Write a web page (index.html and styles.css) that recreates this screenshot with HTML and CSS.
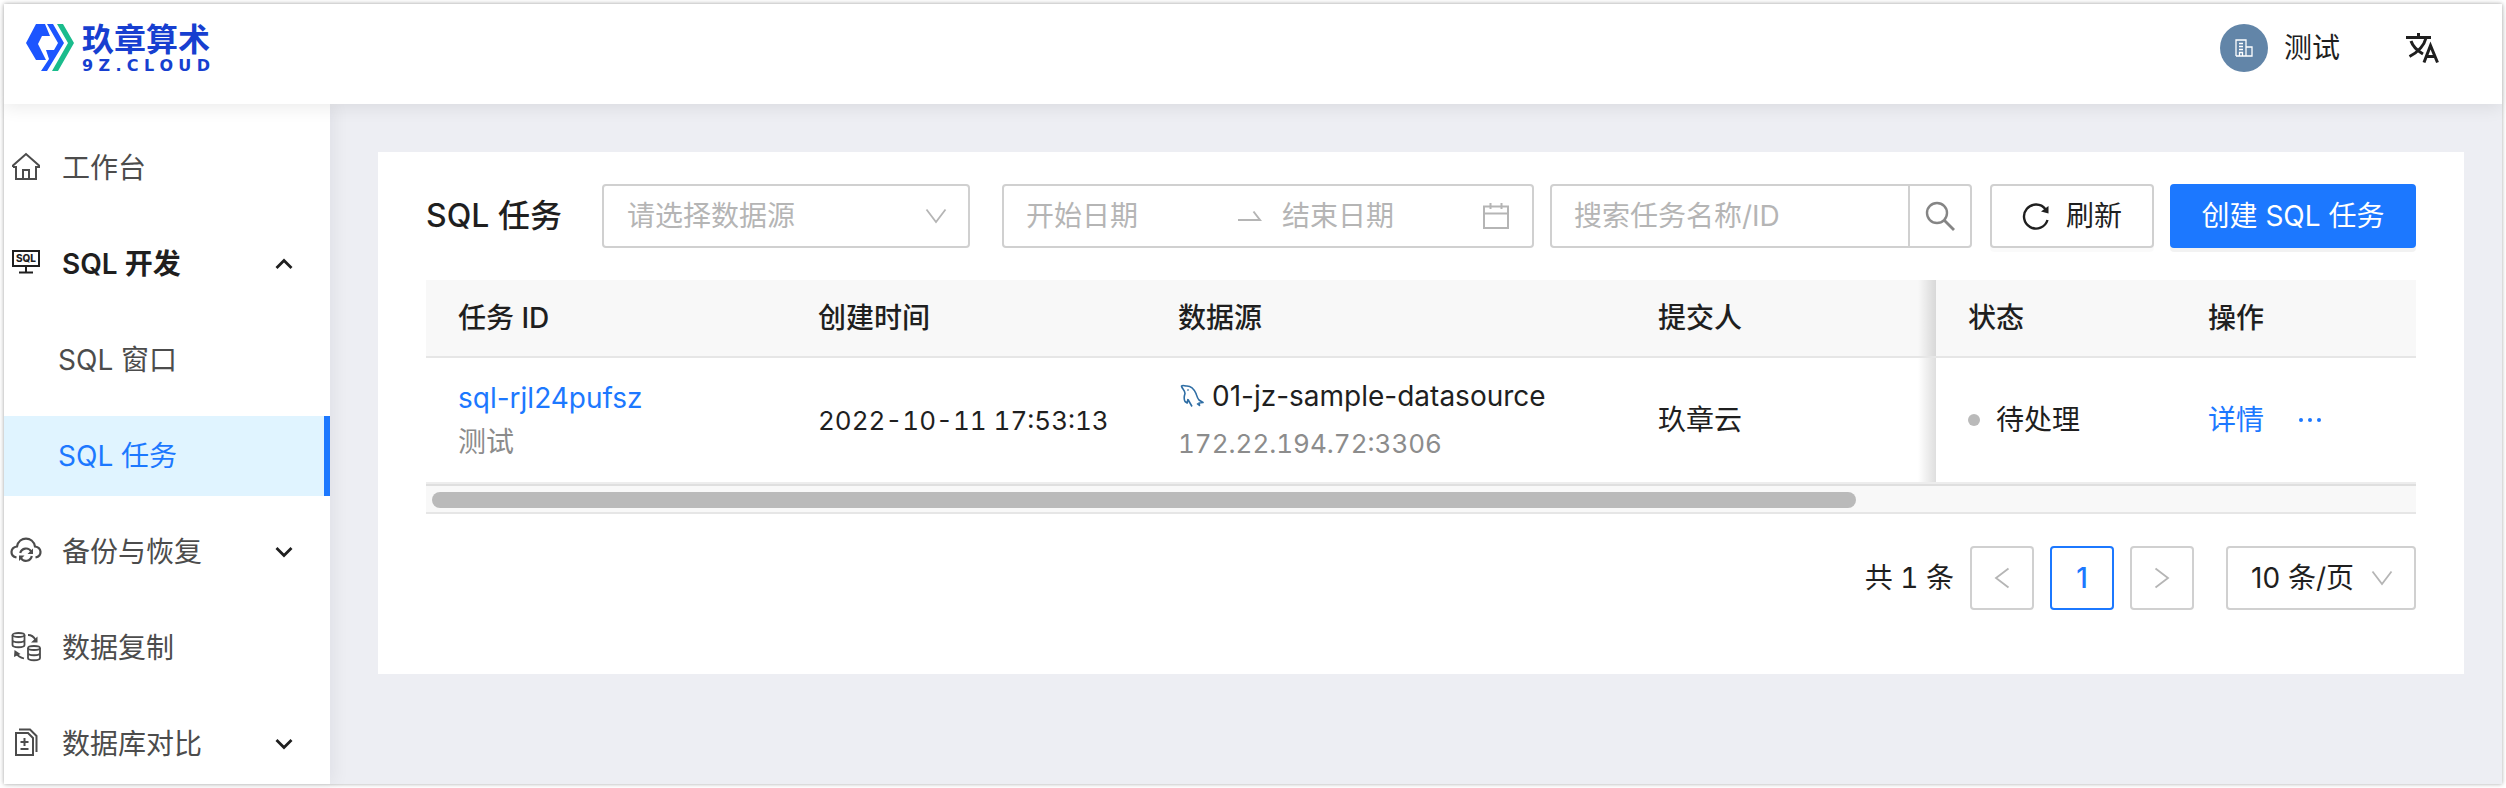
FILE: index.html
```html
<!DOCTYPE html>
<html lang="zh-CN">
<head>
<meta charset="utf-8">
<meta name="viewport" content="width=device-width, initial-scale=1">
<title>SQL 任务</title>
<link rel="stylesheet" href="styles.css">
</head>
<body>
<div class="app">
  <header class="topbar">
    <a class="brand" href="#">
      <svg class="brand-mark" viewBox="0 0 48 48" aria-hidden="true">
        <path fill="#1c55ff" d="M10 0h9l5 12h-8l-4 8 8 16H10L0 19z"/>
        <path fill="#1c55ff" d="M21 0h6l11 19-17 28h-6l8-12-3-9h8l4-7z"/>
        <path fill="#1abc8c" d="M31 0h6l11 19-16 28h-6l16-28z"/>
      </svg>
      <span class="brand-text">
        <span class="brand-name">玖章算术</span>
        <span class="brand-domain"><span>9</span><span>Z</span><span>.</span><span>C</span><span>L</span><span>O</span><span>U</span><span>D</span></span>
      </span>
    </a>
    <div class="account">
      <button class="user" type="button">
        <span class="avatar">
          <svg viewBox="0 0 18 18" aria-hidden="true"><path d="M1 17V1h10v16M1 17h16V8h-6M4 4.500h4M4 7.500h4M4 10.500h4M4.500 17v-3.500h3V17" fill="none" stroke="#fff" stroke-width="1.300"/></svg>
        </span>
        <span>测试</span>
      </button>
      <button class="lang" type="button" aria-label="切换语言">
        <svg viewBox="0 0 34 34" aria-hidden="true"><g fill="none" stroke="#1f1f1f" stroke-width="3"><path d="M0 6.500h25M12.500 2v4M5 10c2 6 6 9.500 12 13M20 7c-2 8-8 14-16.500 18.500"/><path d="M18 31.500L24.500 14.500 31.500 31.500M20.500 25.500h9"/></g></svg>
      </button>
    </div>
  </header>

  <div class="body">
    <nav class="side">
      <a class="item" href="#">
        <svg class="icon" viewBox="0 0 32 32"><path d="M6 14v13h20V14M3 15v-1.500L16 2l13 11.500V15h-3M6 15H3M13 27v-9h6v9" fill="none" stroke="currentColor" stroke-width="2"/></svg>
        <span class="label">工作台</span>
      </a>
      <button class="item open" type="button" aria-expanded="true">
        <svg class="icon" viewBox="0 0 32 32"><path d="M3 3h26v15H3zM16 18v6M9 24.500h14" fill="none" stroke="currentColor" stroke-width="2"/><text x="16" y="14" text-anchor="middle" class="icon-text">SQL</text></svg>
        <span class="label">SQL 开发</span>
        <svg class="caret" viewBox="0 0 18 12"><path d="M1.500 10L9 2.500l7.500 7.500" fill="none" stroke="currentColor" stroke-width="2.800"/></svg>
      </button>
      <a class="item sub" href="#">SQL 窗口</a>
      <a class="item sub current" href="#" aria-current="page">SQL 任务</a>
      <button class="item" type="button" aria-expanded="false">
        <svg class="icon" viewBox="0 0 32 32"><g fill="none" stroke="currentColor" stroke-width="2.200"><path d="M6.500 21.500C-.5 20 0 11.500 7 10.500c2-10.500 16-10.500 18 0 7 1 7.500 9.500 .5 11"/><path d="M10.200 17a6 6 0 0 1 11-1.500M21.800 20a6 6 0 0 1-11 2"/></g><path d="M23 12.500V18h-5.500zM9 25v-5.500h5.500z" fill="currentColor"/></svg>
        <span class="label">备份与恢复</span>
        <svg class="caret" viewBox="0 0 18 12"><path d="M1.500 2L9 9.500 16.500 2" fill="none" stroke="currentColor" stroke-width="2.800"/></svg>
      </button>
      <a class="item" href="#">
        <svg class="icon" viewBox="0 0 32 32"><g fill="none" stroke="currentColor" stroke-width="1.800"><ellipse cx="8.500" cy="3" rx="6" ry="2"/><path d="M2.500 3v10c0 3 12 3 12 0V3M2.500 8c0 3 12 3 12 0"/><ellipse cx="24" cy="16" rx="6" ry="2"/><path d="M18 16v10c0 3 12 3 12 0V16M18 21c0 3 12 3 12 0"/><path d="M18 3c4 0 6 2 7.500 5M14 26.500c-4-1-6-2-7.500-5"/></g><path d="M27.500 4.500v6h-6.500zM4 25l.5-7 6 4z" fill="currentColor"/></svg>
        <span class="label">数据复制</span>
      </a>
      <button class="item" type="button" aria-expanded="false">
        <svg class="icon" viewBox="0 0 32 32"><g fill="none" stroke="currentColor" stroke-width="2"><path d="M6 5h12l5 5v17H6zM9 1.500h11l6.500 6.500v16M10.500 14h8M14.500 10v8M10.500 21h8"/></g></svg>
        <span class="label">数据库对比</span>
        <svg class="caret" viewBox="0 0 18 12"><path d="M1.500 2L9 9.500 16.500 2" fill="none" stroke="currentColor" stroke-width="2.800"/></svg>
      </button>
    </nav>

    <main class="content">
      <section class="card">
        <div class="toolbar">
          <h1 class="title">SQL 任务</h1>
          <div class="select source">
            <select aria-label="数据源"><option>请选择数据源</option></select>
            <svg class="arrow" viewBox="0 0 22 16"><path d="M1.500 1.500L11 14l9.500-12.500" fill="none" stroke="currentColor" stroke-width="1.800"/></svg>
          </div>
          <div class="range">
            <input class="start" type="text" placeholder="开始日期" aria-label="开始日期">
            <svg class="to" viewBox="0 0 24 12"><path d="M0 10h22L15.500 1.500" fill="none" stroke="currentColor" stroke-width="2"/></svg>
            <input type="text" placeholder="结束日期" aria-label="结束日期">
            <svg class="calendar" viewBox="0 0 28 28"><path d="M2 4.500h24V26H2zM2 11.500h24M8.500 1v6M19.500 1v6" fill="none" stroke="currentColor" stroke-width="2"/></svg>
          </div>
          <div class="search">
            <input type="search" placeholder="搜索任务名称/ID" aria-label="搜索任务名称/ID">
            <button type="button" aria-label="搜索"><svg viewBox="0 0 30 30"><circle cx="12" cy="12" r="10" fill="none" stroke="currentColor" stroke-width="2.400"/><path d="M19 19l10 10" stroke="currentColor" stroke-width="2.800"/></svg></button>
          </div>
          <button class="btn refresh" type="button">
            <svg viewBox="0 0 28 28"><path d="M23.500 7.200A12 12 0 1 0 25.500 18" fill="none" stroke="currentColor" stroke-width="2.400"/><path d="M26.500 4v7.500L19 9.500z" fill="currentColor"/></svg>
            刷新
          </button>
          <button class="btn primary" type="button">创建 SQL 任务</button>
        </div>

        <table class="table">
          <colgroup><col class="c-id"><col class="c-time"><col class="c-source"><col class="c-user"><col class="c-state"><col class="c-action"></colgroup>
          <thead>
            <tr><th>任务 ID</th><th>创建时间</th><th>数据源</th><th class="edge">提交人</th><th>状态</th><th>操作</th></tr>
          </thead>
          <tbody>
            <tr>
              <td><a href="#">sql-rjl24pufsz</a><div class="muted">测试</div></td>
              <td><time class="digits" datetime="2022-10-11T17:53:13">2022-10-11 17:53:13</time></td>
              <td>
                <div class="db">
                  <svg viewBox="0 0 26 26"><g fill="none" stroke="#2e6da4" stroke-width="1.600" stroke-linejoin="round"><path d="M10 16.500l2 3.500 2 3.500M10 16l-.8 4-2.200-1.500c-1.500-3-1-5 0-8C7 7 4 6 3.500 3c1-1 3-.5 4.500 0 5-.5 8 3 10 7.500 1 3 1.500 5 3 6.500l4 2.500-4 .5.500 2.500-2.500-2"/><path d="M9.500 6.500l1 1"/></g></svg>
                  <span>01-jz-sample-datasource</span>
                </div>
                <div class="muted host digits">172.22.194.72:3306</div>
              </td>
              <td class="edge">玖章云</td>
              <td><span class="state">待处理</span></td>
              <td>
                <div class="actions">
                  <a href="#">详情</a>
                  <button class="more" type="button" aria-label="更多操作"><svg viewBox="0 0 24 8"><g fill="currentColor"><circle cx="3" cy="4" r="2"/><circle cx="12" cy="4" r="2"/><circle cx="21" cy="4" r="2"/></g></svg></button>
                </div>
              </td>
            </tr>
          </tbody>
        </table>
        <div class="scroll"><div class="thumb"></div></div>

        <div class="pager">
          <span class="total">共 1 条</span>
          <button class="page" type="button" aria-label="上一页" disabled><svg viewBox="0 0 16 22"><path d="M14.500 1.500L2 11l12.500 9.500" fill="none" stroke="currentColor" stroke-width="1.800"/></svg></button>
          <button class="page active" type="button" aria-current="page">1</button>
          <button class="page" type="button" aria-label="下一页" disabled><svg viewBox="0 0 16 22"><path d="M1.500 1.500L14 11 1.500 20.500" fill="none" stroke="currentColor" stroke-width="1.800"/></svg></button>
          <div class="select size">
            <select aria-label="每页条数"><option>10 条/页</option></select>
            <svg class="arrow" viewBox="0 0 22 16"><path d="M1.500 1.500L11 14l9.500-12.500" fill="none" stroke="currentColor" stroke-width="1.800"/></svg>
          </div>
        </div>
      </section>
    </main>
  </div>
</div>
</body>
</html>
```
FILE: styles.css
```css
* {
  box-sizing: border-box;
}

:root {
  --text: #1f1f1f;
  --muted: #8c8c8c;
  --hint: #b5b5b5;
  --border: #d0d0d0;
  --line: #e6e6e6;
  --blue: #1c78ff;
}

body {
  margin: 0;
  padding: 4px;
  background: #fff;
  color: var(--text);
  font: 28px/44px Inter, "Noto Sans CJK SC", sans-serif;
}

a {
  color: var(--blue);
  text-decoration: none;
}

button,
input,
select {
  font: inherit;
  color: inherit;
  margin: 0;
}

svg {
  display: block;
  flex: none;
}

.app {
  display: flex;
  flex-direction: column;
  min-height: calc(100vh - 8px);
  box-shadow: 0 0 4px rgba(0, 0, 0, 0.35);
}

/* Top bar */

.topbar {
  position: relative;
  z-index: 2;
  display: flex;
  align-items: flex-start;
  justify-content: space-between;
  height: 100px;
  padding: 20px 62px 0 22px;
  background: #fff;
  box-shadow: 0 4px 16px rgba(0, 0, 0, 0.08);
}

.brand {
  display: flex;
  gap: 8px;
  color: #173fd0;
}

.brand-mark {
  width: 48px;
  height: 48px;
}

.brand-text {
  display: flex;
  flex-direction: column;
  font-weight: 700;
}

.brand-name {
  font-size: 32px;
  line-height: 32px;
}

.brand-domain {
  display: flex;
  justify-content: space-between;
  font-family: "DejaVu Sans", sans-serif;
  font-size: 16px;
  line-height: 20px;
}

.account {
  display: flex;
  align-items: center;
  gap: 66px;
}

.user,
.lang {
  display: flex;
  align-items: center;
  gap: 16px;
  padding: 0;
  border: 0;
  background: none;
}

.avatar {
  display: grid;
  place-items: center;
  width: 48px;
  height: 48px;
  border-radius: 50%;
  background: #6285a8;
}

.avatar svg {
  width: 18px;
  height: 18px;
}

.lang svg {
  width: 34px;
  height: 34px;
}

/* Sidebar */

.body {
  display: flex;
  flex: 1;
}

.side {
  position: relative;
  z-index: 1;
  display: flex;
  flex-direction: column;
  gap: 16px;
  flex: none;
  width: 326px;
  padding-top: 24px;
  background: #fff;
  box-shadow: 4px 0 16px rgba(0, 21, 41, 0.06);
}

.item {
  display: flex;
  align-items: center;
  height: 80px;
  padding: 0 37px 0 6px;
  border: 0;
  background: none;
  color: #4c4c4c;
  text-align: left;
}

.icon {
  width: 32px;
  height: 32px;
  margin-right: 20px;
}

.icon-text {
  font-size: 10px;
  font-weight: 800;
  fill: currentColor;
}

.label {
  flex: 1;
}

.caret {
  width: 18px;
  height: 12px;
  color: var(--text);
}

.item.open {
  color: var(--text);
  font-weight: 600;
}

.item.sub {
  padding-left: 54px;
}

.item.current {
  border-right: 6px solid var(--blue);
  background: #e0f4ff;
  color: var(--blue);
}

/* Content */

.content {
  flex: 1;
  min-width: 0;
  padding: 48px 38px 48px 48px;
  background: #edeef3;
}

.card {
  padding: 32px 48px 64px;
  background: #fff;
}

.toolbar {
  display: flex;
  align-items: center;
  margin-bottom: 32px;
}

.title {
  margin: 0 auto 0 0;
  font-size: 32px;
  font-weight: 500;
  white-space: nowrap;
}

.select {
  position: relative;
  height: 64px;
}

.select select {
  width: 100%;
  height: 100%;
  padding: 0 23px;
  border: 2px solid var(--border);
  border-radius: 4px;
  background: #fff;
  appearance: none;
}

.arrow {
  position: absolute;
  top: 24px;
  right: 23px;
  width: 22px;
  height: 16px;
  color: var(--hint);
  pointer-events: none;
}

.source {
  width: 368px;
  margin-right: 32px;
}

.source select {
  color: var(--hint);
}

.range,
.search {
  display: flex;
  align-items: center;
  height: 64px;
  border: 2px solid var(--border);
  border-radius: 4px;
  color: var(--hint);
}

.range {
  width: 532px;
  margin-right: 16px;
  padding: 0 22px;
}

.range input,
.search input {
  flex: 1;
  min-width: 0;
  padding: 0;
  border: 0;
  outline: 0;
  background: none;
  appearance: none;
}

.range .start {
  flex: none;
  width: 212px;
}

.range input::placeholder,
.search input::placeholder {
  color: var(--hint);
  opacity: 1;
}

.to {
  width: 24px;
  height: 12px;
  margin-right: 20px;
}

.calendar {
  width: 28px;
  height: 28px;
}

.search {
  width: 422px;
  margin-right: 18px;
}

.search input {
  padding-left: 22px;
}

.search button {
  display: grid;
  place-items: center;
  width: 62px;
  height: 60px;
  border: 0;
  border-left: 2px solid var(--border);
  background: none;
  color: #858585;
}

.search svg {
  width: 30px;
  height: 30px;
}

.btn {
  display: flex;
  align-items: center;
  justify-content: center;
  gap: 16px;
  height: 64px;
  padding: 0 30px;
  border: 2px solid var(--border);
  border-radius: 4px;
  background: #fff;
  box-shadow: 0 4px 0 rgba(0, 0, 0, 0.02);
  white-space: nowrap;
}

.btn svg {
  width: 28px;
  height: 28px;
}

.refresh {
  width: 164px;
  margin-right: 16px;
}

.primary {
  width: 246px;
  border-color: var(--blue);
  background: var(--blue);
  box-shadow: 0 4px 0 rgba(0, 0, 0, 0.05);
  color: #fff;
}

/* Table */

.table {
  width: 100%;
  border-collapse: separate;
  border-spacing: 0;
  table-layout: fixed;
}

.c-id,
.c-time {
  width: 360px;
}

.c-source {
  width: 480px;
}

.c-state,
.c-action {
  width: 240px;
}

.table th,
.table td {
  padding: 16px 32px;
  border-bottom: 2px solid var(--line);
  text-align: left;
}

.table th {
  height: 78px;
  background: #f8f8f8;
  font-weight: 500;
}

.table td {
  height: 126px;
  border-color: #ededed;
}

.table .edge {
  background-image: linear-gradient(to left, rgba(0, 0, 0, 0.13), transparent);
  background-position: right;
  background-repeat: no-repeat;
  background-size: 18px 100%;
}

.muted {
  color: var(--muted);
}

.digits {
  font-size: 26px;
  font-variant-numeric: tabular-nums;
  white-space: nowrap;
}

.db {
  display: flex;
  align-items: center;
  gap: 8px;
}

.db svg {
  width: 26px;
  height: 26px;
}

.host {
  margin-top: 4px;
}

.state {
  display: flex;
  align-items: center;
  gap: 16px;
}

.state::before {
  content: "";
  width: 12px;
  height: 12px;
  border-radius: 50%;
  background: #bababa;
}

.actions {
  display: flex;
  align-items: center;
  gap: 34px;
}

.more {
  padding: 0;
  border: 0;
  background: none;
  color: var(--blue);
}

.more svg {
  width: 24px;
  height: 8px;
}

.scroll {
  height: 30px;
  padding: 6px;
  border-top: 2px solid #dfdfdf;
  border-bottom: 2px solid var(--line);
  background: #f8f8f8;
}

.thumb {
  width: 72%;
  height: 16px;
  border-radius: 8px;
  background: #bababa;
}

/* Pagination */

.pager {
  display: flex;
  align-items: center;
  justify-content: flex-end;
  gap: 16px;
  margin-top: 32px;
}

.total {
  font-variant-numeric: tabular-nums;
}

.page {
  display: grid;
  place-items: center;
  width: 64px;
  height: 64px;
  padding: 0;
  border: 2px solid var(--border);
  border-radius: 4px;
  background: #fff;
  color: var(--hint);
}

.page.active {
  border-color: var(--blue);
  color: var(--blue);
  font-weight: 500;
}

.page svg {
  width: 16px;
  height: 22px;
}

.size {
  width: 190px;
  margin-left: 16px;
}
```
